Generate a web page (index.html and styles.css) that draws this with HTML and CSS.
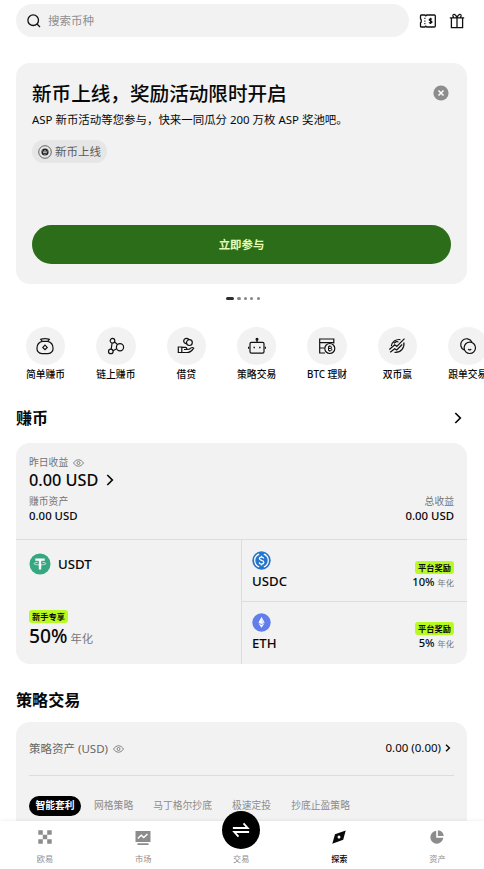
FILE: index.html
```html
<!DOCTYPE html>
<html lang="zh-CN">
<head>
<meta charset="utf-8">
<meta name="viewport" content="width=device-width, initial-scale=1">
<title>探索</title>
<link rel="stylesheet" href="styles.css">
</head>
<body>
<div class="app">
  <header class="topbar">
    <div class="search">
      <svg width="14" height="14" viewBox="0 0 14 14"><circle cx="6.2" cy="6.2" r="5.3"/><path d="M10 10l3 3"/></svg>
      <span>搜索币种</span>
    </div>
    <svg class="top-icon" width="18" height="16" viewBox="0 0 18 16"><path d="M2.300 2h3.500l1 .8 1-.8h7.500q1 0 1 1v10q0 1-1 1H7.800l-1-.8-1 .8H2.300q-.8 0-.8-1V9.800l.7-.6V6.600l-.7-.6V3q0-1 .8-1z"/><path d="M5.900 4.800v7" stroke-dasharray="1.300 1.300" stroke-width="1.100"/><path d="M12.900 6.300c-.6-.7-2.700-.7-2.700.5 0 1.200 2.800.9 2.800 2.200 0 1.200-2.300 1.300-3 .4M11.600 4.800v6.300" stroke-width="1.200"/></svg>
    <svg class="top-icon gift" width="16" height="16" viewBox="0 0 16 16"><path d="M.8 4.900h14.400M2.400 4.900v9.700h11.200V4.900M8 4.900v9.700M8 4.700C6.700.6 3.700.6 3.900 2.900c.1.900.5 1.500 1 1.900M8 4.700c1.300-4.100 4.300-4.100 4.100-1.800-.1.900-.5 1.500-1 1.900"/></svg>
  </header>

  <section class="banner">
    <div class="banner-head">
      <h1>新币上线，奖励活动限时开启</h1>
      <svg width="16" height="16" viewBox="0 0 16 16"><circle cx="8" cy="8" r="7.600" fill="#8d8d8d"/><path d="M5.500 5.500l5 5m0-5l-5 5" stroke="#fff" stroke-width="1.500"/></svg>
    </div>
    <p>ASP 新币活动等您参与，快来一同瓜分 200 万枚 ASP 奖池吧。</p>
    <div class="tag">
      <svg width="14" height="14" viewBox="0 0 14 14"><circle cx="7" cy="7" r="6.300" fill="none" stroke="#444" stroke-width=".8"/><circle cx="7" cy="7" r="3.600" fill="#222"/><path d="M7 5.200l1.600 2.800L7 7.300 5.400 8zM4.500 6l1 .6M9.500 6l-1 .6M7 8.600V10" fill="none" stroke="#e5e5e5" stroke-width=".7"/></svg>
      <span>新币上线</span>
    </div>
    <button class="cta">立即参与</button>
  </section>
  <div class="dots"><i class="on"></i><i></i><i></i><i></i><i></i></div>

  <nav class="quick">
    <a><span class="disc"><svg viewBox="0 0 20 20"><path d="M7.300 5.400L5.700 3.300c1.900-.9 2.500.1 4.300-.8 1.800.9 2.400-.1 4.300.8l-1.600 2.100M7.300 5.400h5.400M7.300 5.400C.2 7.200.2 17.600 7 17.600h6c6.800 0 6.800-10.400-.3-12.200M10 9.200l2.200 2.200-2.200 2.200-2.200-2.200z"/></svg></span><span>简单赚币</span></a>
    <a><span class="disc"><svg viewBox="0 0 20 20"><circle cx="6.500" cy="4.700" r="2.300"/><circle cx="14" cy="11.200" r="3.600"/><circle cx="4.800" cy="15.400" r="2.300"/><path d="M8.500 5.900l3 2.600M6.100 7l-.9 6M7 14.700l3.700-1.900"/></svg></span><span>链上赚币</span></a>
    <a><span class="disc"><svg viewBox="0 0 20 20"><circle cx="10.400" cy="5" r="2.700"/><circle cx="13.400" cy="6.600" r="2.900" fill="#f2f2f2"/><path d="M2.300 11h3.500v5.500H2.300zM5.800 11.300h3.500c2 0 2 2.200 0 2.200H8M5.800 16.500h5.500c2.700 0 4.800-1.900 6.400-4.400-1.200-1.200-3.200-.1-4.500 1.100l-3.200.1"/></svg></span><span>借贷</span></a>
    <a><span class="disc"><svg viewBox="0 0 20 20"><rect x="3" y="6.400" width="14" height="10.800" rx="1.400"/><circle cx="10" cy="3.200" r=".9" fill="#111"/><path d="M10 3.500v2.900M1.600 10.800v2M18.400 10.800v2"/><path d="M7.200 10.800v1.500M12.800 10.800v1.500" stroke-width="1.400"/></svg></span><span>策略交易</span></a>
    <a><span class="disc"><svg viewBox="0 0 20 20"><path d="M8 17H2.700V3h14.100v4.500M2.700 6.700h14.100M2.700 12H7.500"/><circle cx="12.800" cy="12.500" r="5"/><path d="M11.500 10.300h2c1.400 0 1.400 2.100 0 2.100h-2 2.200c1.500 0 1.500 2.200 0 2.200h-2.200zM12.700 9.400v1M12.700 14.600v1" stroke-width="1"/></svg></span><span>BTC 理财</span></a>
    <a><span class="disc"><svg viewBox="0 0 20 20"><path d="M4.300 10.200C5 6 8.500 3 13.400 3.600M16.800 6.500c1 4.500-2.500 10.500-9.300 9.900M2.300 13.500l5.500-4.800 2 1.700 7.700-7.700M3.200 16.300l4.500-3.600 2 1.300 5.500-5.500M7 7.200l2.500-1.800 2 .6"/></svg></span><span>双币赢</span></a>
    <a><span class="disc"><svg viewBox="0 0 20 20"><circle cx="11.800" cy="11.800" r="5.700"/><path d="M6.500 14.200A5.900 5.900 0 1 1 14 6.300M10.200 13.200c.7 1 2.300 1 3 0"/></svg></span><span>跟单交易</span></a>
  </nav>

  <div class="section-head earn-head"><h2>赚币</h2><svg width="8" height="12" viewBox="0 0 8 12"><path d="M1.300 1l5 5-5 5"/></svg></div>
  <section class="card earn">
    <div class="summary">
      <div class="label">昨日收益 <svg class="eye" width="11" height="8" viewBox="0 0 11 8"><path d="M.5 4c2.700-4.300 7.300-4.300 10 0-2.700 4.300-7.300 4.300-10 0z"/><circle cx="5.500" cy="4" r="1.500"/></svg></div>
      <div class="big">0.00 USD <svg width="8" height="12" viewBox="0 0 8 12"><path d="M1.300 1l5 5-5 5"/></svg></div>
      <div class="pair label second"><span>赚币资产</span><span>总收益</span></div>
      <div class="pair money"><span>0.00 USD</span><span>0.00 USD</span></div>
    </div>
    <div class="coins">
      <div class="coin-main">
        <div class="coin-title">
          <svg width="22" height="22" viewBox="0 0 22 22"><circle cx="11" cy="11" r="10.500" fill="#35a781"/><path d="M6.300 5.500h9.400v2.300h-3.500v8.700H9.800V7.800H6.300z" fill="#fff"/><path d="M8.500 9.300c-5 .6-4.700 2.600 2.500 2.600s7.500-2 2.500-2.600" fill="none" stroke="#fff" stroke-width=".7"/></svg>
          <span>USDT</span>
        </div>
        <span class="badge">新手专享</span>
        <div class="rate-big"><b>50%</b><span>年化</span></div>
      </div>
      <div class="coin-list">
        <div class="coin">
          <div class="coin-id">
            <svg width="19" height="19" viewBox="0 0 19 19"><circle cx="9.500" cy="9.500" r="9.200" fill="#2775ca"/><path d="M7.200 3.100a6.800 6.800 0 0 0 0 12.800M11.800 3.100a6.800 6.800 0 0 1 0 12.800M11.700 7.500c-.3-2-4.300-2-4.300.2s4.400 1.300 4.400 3.600c0 2.300-4.300 2.300-4.600 0M9.500 4.700v1.500M9.500 12.900v1.500" fill="none" stroke="#fff" stroke-width="1.250"/></svg>
            <span>USDC</span>
          </div>
          <div class="coin-rate"><span class="badge">平台奖励</span><div><b>10%</b><span>年化</span></div></div>
        </div>
        <div class="coin">
          <div class="coin-id">
            <svg width="19" height="19" viewBox="0 0 19 19"><circle cx="9.500" cy="9.500" r="9.200" fill="#627eea"/><path d="M9.500 4l3 5.400-3 1.800-3-1.800zM6.500 10.300l3 1.800 3-1.800-3 4.400z" fill="#fff"/><path d="M9.500 4l3 5.400-3 1.800z" fill="#dfe5fb"/></svg>
            <span>ETH</span>
          </div>
          <div class="coin-rate"><span class="badge">平台奖励</span><div><b>5%</b><span>年化</span></div></div>
        </div>
      </div>
    </div>
  </section>

  <div class="section-head strategy-head"><h2>策略交易</h2></div>
  <section class="card strategy">
    <div class="assets">
      <span class="assets-label">策略资产 (USD) <svg class="eye" width="11" height="8" viewBox="0 0 11 8"><path d="M.5 4c2.700-4.300 7.300-4.300 10 0-2.700 4.300-7.300 4.300-10 0z"/><circle cx="5.500" cy="4" r="1.500"/></svg></span>
      <span class="assets-value">0.00 (0.00)<svg width="6" height="8" viewBox="0 0 6 8"><path d="M1 .8L4.400 4 1 7.200"/></svg></span>
    </div>
    <div class="tabs"><span class="active">智能套利</span><span>网格策略</span><span>马丁格尔抄底</span><span>极速定投</span><span>抄底止盈策略</span></div>
  </section>

  <footer class="tabbar">
    <a><svg width="14" height="14" viewBox="0 0 14 14"><path d="M.3.300h4.500v4.500H.3zM9.200.300h4.500v4.500H9.200zM4.800 4.800h4.400v4.400H4.800zM.3 9.200h4.500v4.500H.3zM9.200 9.200h4.500v4.500H9.200z"/></svg>欧易</a>
    <a><svg width="16" height="16" viewBox="0 0 16 16"><path d="M.5 1h15v11H.500zM2.500 13.300h11V15h-11z"/><path d="M2.800 8.500l3.500-3.200 2.400 2.200 3.800-3.600" fill="none" stroke="#fff" stroke-width="1.400"/></svg>市场</a>
    <a class="trade"><span class="fab"><svg width="22" height="20" viewBox="0 0 22 20"><path d="M2 7.800h16.500L13.800 2.700M20 12.200H3.500l4.700 5.100" fill="none" stroke="#fff" stroke-width="2"/></svg></span>交易</a>
    <a class="current"><svg width="14" height="14" viewBox="0 0 14 14"><path fill-rule="evenodd" d="M13.700.500l-2.500 9.200L.300 13.700l2.700-9.400zM7 5.200L5.200 7.100 7 9l1.800-1.900z"/></svg>探索</a>
    <a><svg width="14" height="14" viewBox="0 0 14 14"><path d="M6.200.700v7.100h7.100A6.500 6.500 0 1 1 6.200.700z"/><path d="M7.900.300a6.300 6.300 0 0 1 5.800 5.800H7.900z"/></svg>资产</a>
  </footer>
</div>
</body>
</html>
```
FILE: styles.css
```css
* { box-sizing: border-box; }
body {
  margin: 0;
  background: #fff;
  color: #080808;
  font-family: "Noto Sans", "Noto Sans CJK SC", sans-serif;
}
h1, h2, p { margin: 0; }
svg { flex: none; }
.app {
  position: relative;
  width: 484px;
  height: 869px;
  overflow: hidden;
  padding-top: 4px;
}
.topbar {
  display: flex;
  align-items: center;
  height: 33px;
  padding: 0 18px 0 16px;
}
.search {
  display: flex;
  align-items: center;
  gap: 7px;
  width: 392.5px;
  height: 33px;
  padding-left: 11px;
  border-radius: 17px;
  background: #f2f2f2;
  color: #8f8f8f;
  font-size: 11.5px;
}
.search span { margin-top: -2px; }
.search svg, .top-icon { fill: none; stroke: #111; stroke-width: 1.3; }
.top-icon { margin-left: 10.5px; }
.gift { margin-left: 12px; }

.banner {
  width: 451px;
  height: 221px;
  margin: 26px 0 0 16px;
  padding: 16px 16px 0;
  border-radius: 14px;
  background: #f2f2f2;
}
.banner-head {
  display: flex;
  justify-content: space-between;
  align-items: center;
  height: 28px;
  padding-right: 2px;
}
h1 { padding-top: 1px; font-size: 19.6px; font-weight: 500; line-height: 28px; white-space: nowrap; }
.banner p { margin-top: 4px; font-size: 11.45px; line-height: 18px; white-space: nowrap; }
.tag {
  display: flex;
  align-items: center;
  gap: 3px;
  width: 75px;
  height: 23px;
  margin-top: 11px;
  padding-left: 6px;
  border-radius: 12px;
  background: #e6e6e6;
  color: #5c5c5c;
  font-size: 11.5px;
  white-space: nowrap;
}
.tag span { margin-top: -1px; }
.cta {
  display: block;
  width: 100%;
  height: 39px;
  margin-top: 62px;
  padding: 0;
  border: 0;
  border-radius: 20px;
  background: #2c6d19;
  color: #e4ffb5;
  font: 700 11.4px/40px "Noto Sans", "Noto Sans CJK SC", sans-serif;
}
.dots {
  display: flex;
  justify-content: center;
  gap: 3.2px;
  margin: 13px 0 0 2px;
  height: 3px;
}
.dots i { width: 3.3px; height: 3px; border-radius: 2px; background: #858585; }
.dots .on { width: 8px; background: #2d2d2d; }

.quick { display: flex; margin: 27px 0 0 10.3px; height: 56px; }
.quick a {
  display: flex;
  flex: none;
  flex-direction: column;
  align-items: center;
  width: 70.4px;
  font-size: 9.8px;
  line-height: 16px;
  font-weight: 500;
  white-space: nowrap;
}
.disc {
  display: flex;
  align-items: center;
  justify-content: center;
  width: 39.5px;
  height: 39.5px;
  margin-bottom: 2px;
  border-radius: 50%;
  background: #f2f2f2;
}
.disc svg { width: 20px; height: 20px; fill: none; stroke: #111; stroke-width: 1.2; }

.section-head {
  display: flex;
  align-items: center;
  justify-content: space-between;
  height: 24px;
  padding: 0 22px 0 16px;
}
h2 { font-size: 16.1px; font-weight: 700; line-height: 24px; }
.section-head svg, .big svg, .assets-value svg { fill: none; stroke: #080808; stroke-width: 1.7; }
.earn-head { margin-top: 23px; }
.card { width: 451px; margin-left: 16px; border-radius: 14px; background: #f2f2f2; }
.earn { height: 221px; margin-top: 13px; }
.summary { height: 97px; padding: 11px 13px 0; border-bottom: 1px solid #dcdcdc; }
.label { color: #737373; font-size: 9.8px; line-height: 17px; }
.eye { margin-left: 2px; vertical-align: -.5px; fill: none; stroke: #777; stroke-width: .9; }
.big { font-size: 16.3px; font-weight: 500; line-height: 18px; white-space: nowrap; }
.big svg { margin-left: 3px; vertical-align: 0; }
.pair { display: flex; justify-content: space-between; }
.second { margin-top: 5px; line-height: 15px; }
.money { font-size: 11.4px; font-weight: 500; line-height: 13px; }
.coins { display: flex; height: 124px; }
.coin-main { width: 226px; padding: 13px 13px 0; border-right: 1px solid #dcdcdc; }
.coin-title { display: flex; align-items: center; gap: 7px; height: 22px; font-size: 13.2px; font-weight: 500; }
.badge {
  display: block;
  width: 39px;
  height: 13px;
  border-radius: 3px;
  background: #b9fa23;
  font-size: 8.2px;
  line-height: 13px;
  font-weight: 700;
  text-align: center;
  white-space: nowrap;
}
.coin-main .badge { margin-top: 35px; }
b { font-weight: 500; }
.rate-big { display: flex; align-items: baseline; gap: 3px; line-height: 25px; }
.rate-big b { font-size: 19.3px; font-weight: 500; }
.rate-big span { font-size: 11.3px; color: #777; }
.coin-list { flex: 1; }
.coin { display: flex; justify-content: space-between; height: 61px; padding: 11px 13px 0 10px; }
.coin + .coin { height: 62px; border-top: 1px solid #dcdcdc; }
.coin-id svg { display: block; }
.coin-id span { display: block; margin-top: 2px; font-size: 13.2px; font-weight: 500; line-height: 18px; }
.coin-rate { display: flex; flex-direction: column; align-items: flex-end; padding-top: 10px; }
.coin + .coin .coin-rate { padding-top: 9px; }
.coin-rate div { display: flex; align-items: baseline; gap: 3px; line-height: 16px; }
.coin-rate b { font-size: 11.2px; }
.coin-rate div span { font-size: 8.2px; color: #777; }

.strategy-head { margin-top: 24px; }
.strategy { height: 150px; margin-top: 10px; padding: 0 13px; }
.assets {
  display: flex;
  justify-content: space-between;
  align-items: center;
  height: 54px;
  padding-bottom: 2px;
  border-bottom: 1px solid #dcdcdc;
  font-size: 11.5px;
  white-space: nowrap;
}
.assets-label { color: #666; }
.assets-value { display: flex; align-items: center; gap: 4px; padding-right: 3px; }
.assets-value svg { stroke-width: 1.4; }
.tabs { display: flex; gap: 20px; margin-top: 20px; font-size: 9.8px; line-height: 20px; color: #8c8c8c; white-space: nowrap; }
.tabs .active {
  width: 52px;
  margin-right: -7px;
  border-radius: 10px;
  background: #000;
  color: #fff;
  font-weight: 700;
  text-align: center;
}
.tabbar {
  position: absolute;
  bottom: 0;
  left: 0;
  display: flex;
  width: 484px;
  height: 48px;
  padding-top: 8px;
  background: #fff;
  box-shadow: 0 -1px 3px rgba(0, 0, 0, .06);
}
.tabbar a {
  display: flex;
  flex: none;
  flex-direction: column;
  align-items: center;
  justify-content: space-between;
  width: 98.1px;
  height: 38px;
  font-size: 8.2px;
  line-height: 16px;
  color: #8c8c8c;
  fill: #8c8c8c;
}
.tabbar a:first-child { margin-left: -4px; }
.tabbar svg { margin-top: 1px; }
.tabbar .current { color: #080808; fill: #080808; font-weight: 500; }
.fab {
  display: flex;
  align-items: center;
  justify-content: center;
  width: 38px;
  height: 38px;
  margin-top: -18px;
  border-radius: 50%;
  background: #000;
}
.fab svg { width: 20px; height: 18px; margin-top: 0; }
```
